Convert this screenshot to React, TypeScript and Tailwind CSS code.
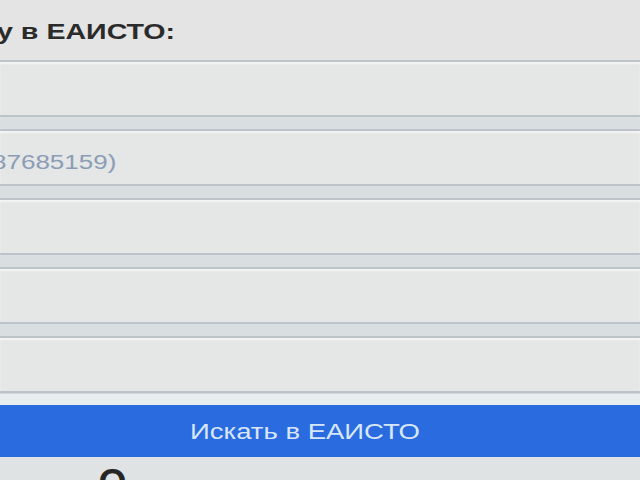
const font = { fontFamily: '"Liberation Sans", Arial, sans-serif' };

function Field({ value }: { value?: string }) {
  return (
    <div className="flex h-[57px] items-center border-y-2 border-y-[#bcc3c9] bg-[#e5e6e6] shadow-[inset_0_2px_2px_rgba(255,255,255,0.6)]">
      {value && (
        <span className="-ml-[8px] mt-[8px] inline-block origin-left scale-x-[1.3] text-[20px] text-[#8b9db6]">
          {value}
        </span>
      )}
    </div>
  );
}

export default function App() {
  return (
    <div className="h-[480px] w-[640px] overflow-hidden bg-[#e4e4e4]" style={font}>
      {/* label */}
      <div className="flex h-[60px] items-start pt-[20px]">
        <span className="-ml-[3px] inline-block origin-left scale-x-[1.3] text-[22px] font-bold leading-6 text-[#2b2b2b]">
          у в ЕАИСТО:
        </span>
      </div>

      <div className="flex flex-col gap-[12px] bg-[#d9dee1]">
        <Field />
        <Field value="87685159)" />
        <Field />
        <Field />
        <Field />
      </div>
      <div className="h-[12px] border-t border-t-[#cfd5d9] bg-[#e8eeef]" />
      <button className="flex h-[52px] w-full items-center justify-center bg-[#2a6ce0] pr-[30px] text-[#d8e6fa]">
        <span className="inline-block scale-x-[1.25] text-[22px]">Искать в ЕАИСТО</span>
      </button>

      <div className="flex h-[23px] items-start gap-[54px] bg-[#e0e3e4] pl-[34px] pt-[8px]">
        <span className="mt-[10px] text-[11px] leading-none text-[#c4c8ca]">· ·</span>
        <span className="text-[36px] font-bold leading-none text-[#262626]">О</span>
      </div>
    </div>
  );
}
